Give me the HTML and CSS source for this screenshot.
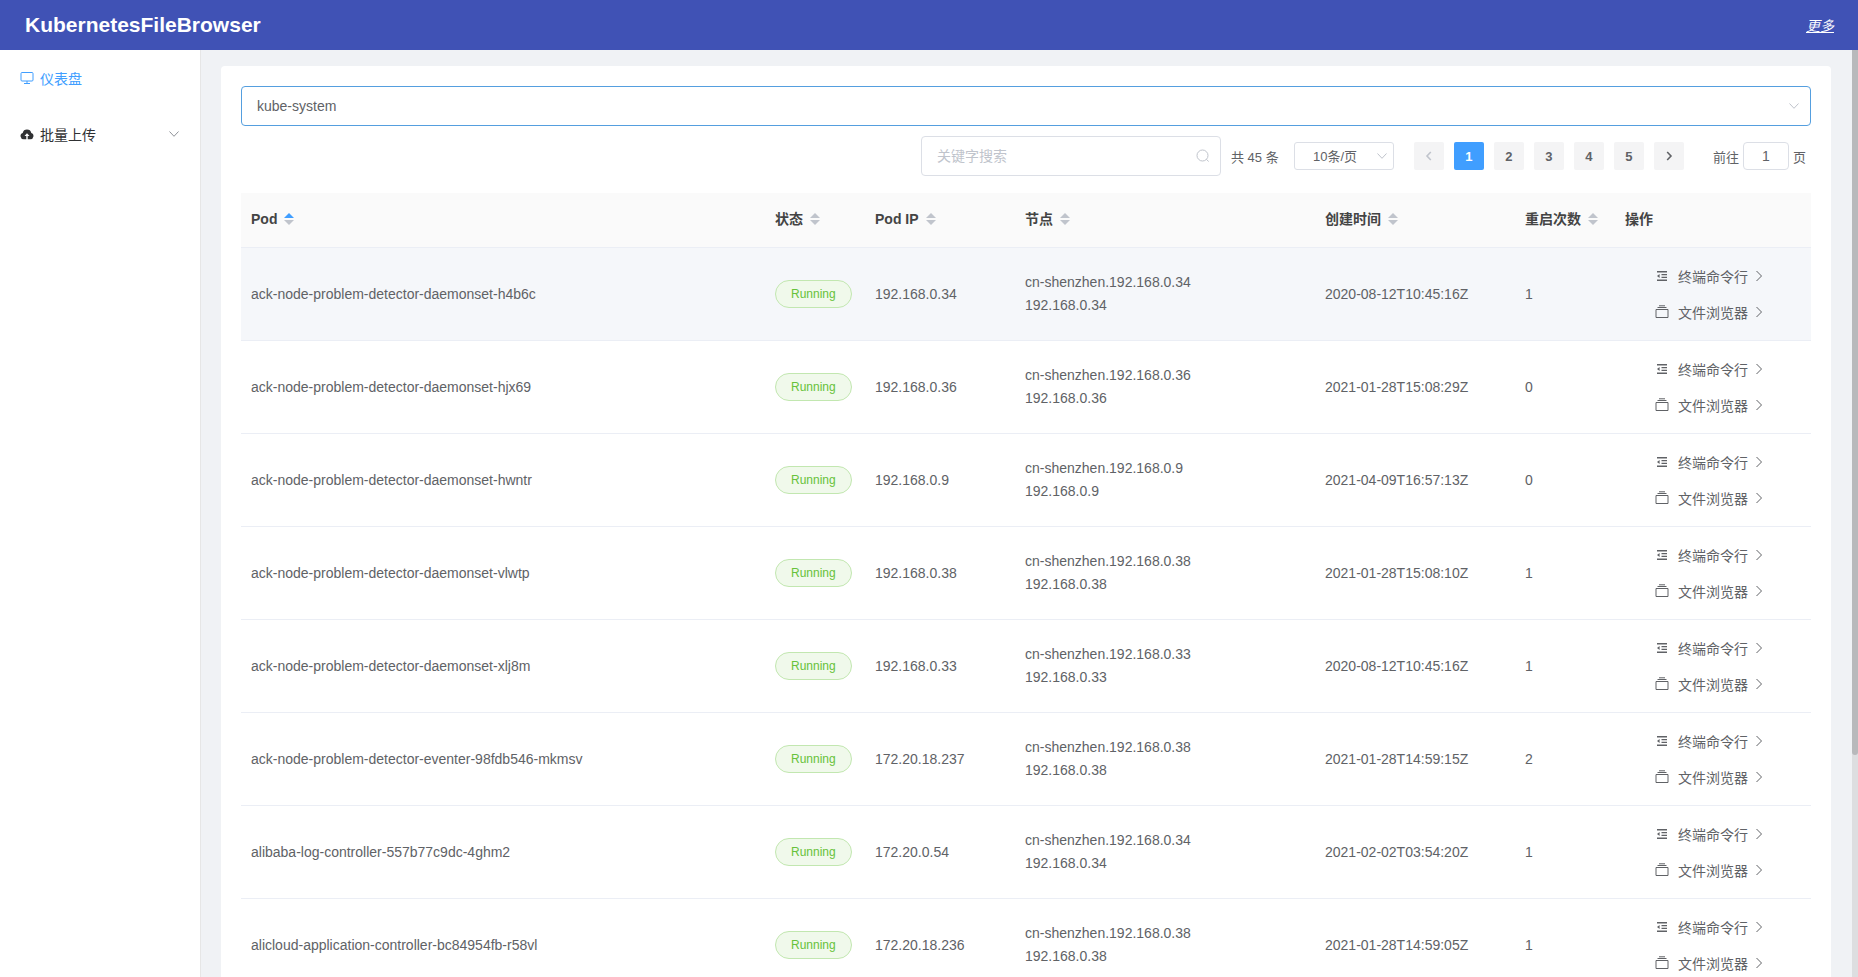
FILE: index.html
```html
<!DOCTYPE html>
<html lang="zh-CN">
<head>
<meta charset="utf-8">
<title>KubernetesFileBrowser</title>
<link rel="stylesheet" href="styles.css">
</head>
<body>
<svg class="sprite" aria-hidden="true">
  <symbol id="i-down" viewBox="0 0 12 12"><path d="M1.5 3.5 6 8.3l4.500-4.800" fill="none" stroke="currentColor"/></symbol>
  <symbol id="i-left" viewBox="0 0 12 12"><path d="M7.800 2 4 6l3.800 4" fill="none" stroke="currentColor" stroke-width="1.600"/></symbol>
  <symbol id="i-right" viewBox="0 0 12 12"><path d="M4.200 2 8 6l-3.800 4" fill="none" stroke="currentColor" stroke-width="1.600"/></symbol>
  <symbol id="i-go" viewBox="0 0 14 14"><path d="M4.500 2 9.500 7l-5 5" fill="none" stroke="currentColor"/></symbol>
  <symbol id="i-search" viewBox="0 0 14 14"><circle cx="6.500" cy="6.500" r="5.500" fill="none" stroke="currentColor"/><path d="m10.300 10.300 2.400 2.200" stroke="currentColor"/></symbol>
  <symbol id="i-monitor" viewBox="0 0 14 14"><rect x="1" y="1.500" width="12" height="8.500" rx="1" fill="none" stroke="currentColor"/><path d="M7 10v2.500M4 12.500h6" fill="none" stroke="currentColor"/></symbol>
  <symbol id="i-cloud" viewBox="0 0 14 14"><path d="M3.700 12.300a3.300 3.300 0 0 1-1-6.400 4.400 4.400 0 0 1 8.600 0 3.300 3.300 0 0 1-1 6.400H7.700V9h1.800L7 6.300 4.500 9h1.800v3.300z" fill="currentColor"/></symbol>
  <symbol id="i-term" viewBox="0 0 14 14"><path d="M2 2h10v1.600H2zM6.500 5h5.500v1.300H6.500zM6.500 7.700H12V9H6.500zM2 10.400h10V12H2zM2 7l2.600-2v4z" fill="currentColor"/></symbol>
  <symbol id="i-box" viewBox="0 0 14 14"><path d="M1 4.500h12v8H1z" fill="none" stroke="currentColor"/><path d="M2.500 2.500h9M4 .8h6" stroke="currentColor"/></symbol>
  <symbol id="i-sort" viewBox="0 0 10 12"><path class="up" d="M0 5 5 0l5 5z"/><path class="dn" d="M0 7h10l-5 5z"/></symbol>
</svg>
<header class="topbar">
  <h1 class="brand">KubernetesFileBrowser</h1>
  <a class="more" href="#">更多</a>
</header>
<div class="body">
  <nav class="side">
    <a class="item active" href="#"><svg class="ic"><use href="#i-monitor"/></svg><span>仪表盘</span></a>
    <a class="item" href="#"><svg class="ic"><use href="#i-cloud"/></svg><span>批量上传</span><svg class="ic-s arrow"><use href="#i-down"/></svg></a>
  </nav>
  <main class="main">
    <section class="card">
      <div class="pick ns">
        <select aria-label="命名空间"><option>kube-system</option></select>
        <svg class="ic-s"><use href="#i-down"/></svg>
      </div>
      <div class="tools">
        <div class="search">
          <input type="text" placeholder="关键字搜索" aria-label="关键字搜索">
          <svg class="ic"><use href="#i-search"/></svg>
        </div>
        <span class="total">共 45 条</span>
        <div class="pick size">
          <select aria-label="每页条数"><option>10条/页</option></select>
          <svg class="ic-s"><use href="#i-down"/></svg>
        </div>
        <div class="pager">
          <button type="button" disabled aria-label="上一页"><svg class="ic-s"><use href="#i-left"/></svg></button>
          <button type="button" class="on">1</button>
          <button type="button">2</button>
          <button type="button">3</button>
          <button type="button">4</button>
          <button type="button">5</button>
          <button type="button" aria-label="下一页"><svg class="ic-s"><use href="#i-right"/></svg></button>
        </div>
        <label class="jump">前往<input type="text" value="1">页</label>
      </div>
      <table class="pods">
        <colgroup><col><col class="w100"><col class="w150"><col class="w300"><col class="w200"><col class="w100"><col class="w196"></colgroup>
        <thead>
          <tr>
            <th>Pod<svg class="sort asc"><use href="#i-sort"/></svg></th>
            <th>状态<svg class="sort"><use href="#i-sort"/></svg></th>
            <th>Pod IP<svg class="sort"><use href="#i-sort"/></svg></th>
            <th>节点<svg class="sort"><use href="#i-sort"/></svg></th>
            <th>创建时间<svg class="sort"><use href="#i-sort"/></svg></th>
            <th>重启次数<svg class="sort"><use href="#i-sort"/></svg></th>
            <th>操作</th>
          </tr>
        </thead>
        <tbody>
          <tr class="hover"><td>ack-node-problem-detector-daemonset-h4b6c</td><td><span class="tag">Running</span></td><td>192.168.0.34</td><td>cn-shenzhen.192.168.0.34<br>192.168.0.34</td><td>2020-08-12T10:45:16Z</td><td>1</td><td class="ops"><button type="button"><svg class="ic"><use href="#i-term"/></svg><span>终端命令行</span><svg class="ic"><use href="#i-go"/></svg></button><button type="button"><svg class="ic"><use href="#i-box"/></svg><span>文件浏览器</span><svg class="ic"><use href="#i-go"/></svg></button></td></tr>
          <tr><td>ack-node-problem-detector-daemonset-hjx69</td><td><span class="tag">Running</span></td><td>192.168.0.36</td><td>cn-shenzhen.192.168.0.36<br>192.168.0.36</td><td>2021-01-28T15:08:29Z</td><td>0</td><td class="ops"><button type="button"><svg class="ic"><use href="#i-term"/></svg><span>终端命令行</span><svg class="ic"><use href="#i-go"/></svg></button><button type="button"><svg class="ic"><use href="#i-box"/></svg><span>文件浏览器</span><svg class="ic"><use href="#i-go"/></svg></button></td></tr>
          <tr><td>ack-node-problem-detector-daemonset-hwntr</td><td><span class="tag">Running</span></td><td>192.168.0.9</td><td>cn-shenzhen.192.168.0.9<br>192.168.0.9</td><td>2021-04-09T16:57:13Z</td><td>0</td><td class="ops"><button type="button"><svg class="ic"><use href="#i-term"/></svg><span>终端命令行</span><svg class="ic"><use href="#i-go"/></svg></button><button type="button"><svg class="ic"><use href="#i-box"/></svg><span>文件浏览器</span><svg class="ic"><use href="#i-go"/></svg></button></td></tr>
          <tr><td>ack-node-problem-detector-daemonset-vlwtp</td><td><span class="tag">Running</span></td><td>192.168.0.38</td><td>cn-shenzhen.192.168.0.38<br>192.168.0.38</td><td>2021-01-28T15:08:10Z</td><td>1</td><td class="ops"><button type="button"><svg class="ic"><use href="#i-term"/></svg><span>终端命令行</span><svg class="ic"><use href="#i-go"/></svg></button><button type="button"><svg class="ic"><use href="#i-box"/></svg><span>文件浏览器</span><svg class="ic"><use href="#i-go"/></svg></button></td></tr>
          <tr><td>ack-node-problem-detector-daemonset-xlj8m</td><td><span class="tag">Running</span></td><td>192.168.0.33</td><td>cn-shenzhen.192.168.0.33<br>192.168.0.33</td><td>2020-08-12T10:45:16Z</td><td>1</td><td class="ops"><button type="button"><svg class="ic"><use href="#i-term"/></svg><span>终端命令行</span><svg class="ic"><use href="#i-go"/></svg></button><button type="button"><svg class="ic"><use href="#i-box"/></svg><span>文件浏览器</span><svg class="ic"><use href="#i-go"/></svg></button></td></tr>
          <tr><td>ack-node-problem-detector-eventer-98fdb546-mkmsv</td><td><span class="tag">Running</span></td><td>172.20.18.237</td><td>cn-shenzhen.192.168.0.38<br>192.168.0.38</td><td>2021-01-28T14:59:15Z</td><td>2</td><td class="ops"><button type="button"><svg class="ic"><use href="#i-term"/></svg><span>终端命令行</span><svg class="ic"><use href="#i-go"/></svg></button><button type="button"><svg class="ic"><use href="#i-box"/></svg><span>文件浏览器</span><svg class="ic"><use href="#i-go"/></svg></button></td></tr>
          <tr><td>alibaba-log-controller-557b77c9dc-4ghm2</td><td><span class="tag">Running</span></td><td>172.20.0.54</td><td>cn-shenzhen.192.168.0.34<br>192.168.0.34</td><td>2021-02-02T03:54:20Z</td><td>1</td><td class="ops"><button type="button"><svg class="ic"><use href="#i-term"/></svg><span>终端命令行</span><svg class="ic"><use href="#i-go"/></svg></button><button type="button"><svg class="ic"><use href="#i-box"/></svg><span>文件浏览器</span><svg class="ic"><use href="#i-go"/></svg></button></td></tr>
          <tr><td>alicloud-application-controller-bc84954fb-r58vl</td><td><span class="tag">Running</span></td><td>172.20.18.236</td><td>cn-shenzhen.192.168.0.38<br>192.168.0.38</td><td>2021-01-28T14:59:05Z</td><td>1</td><td class="ops"><button type="button"><svg class="ic"><use href="#i-term"/></svg><span>终端命令行</span><svg class="ic"><use href="#i-go"/></svg></button><button type="button"><svg class="ic"><use href="#i-box"/></svg><span>文件浏览器</span><svg class="ic"><use href="#i-go"/></svg></button></td></tr>
        </tbody>
      </table>
    </section>
  </main>
  <div class="scroll"><div class="thumb"></div></div>
</div>
</body>
</html>
```
FILE: styles.css
```css
* { box-sizing: border-box; }
body, button, input, select {
  font-family: "Liberation Sans", "Noto Sans CJK SC", sans-serif;
  font-size: 14px;
  color: #606266;
}
body {
  margin: 0;
  height: 100vh;
  display: flex;
  flex-direction: column;
  overflow: hidden;
  background: #f0f2f5;
}
.sprite { display: none; }
.ic { width: 14px; height: 14px; flex: none; }
.ic-s { width: 12px; height: 12px; flex: none; }

.topbar {
  flex: none;
  height: 50px;
  padding: 0 24px 0 25px;
  display: flex;
  align-items: center;
  justify-content: space-between;
  background: #4052b5;
}
.brand { margin: 0; font-size: 21px; line-height: 24px; color: #fff; }
.more { color: #fff; font-style: italic; text-decoration: underline; text-underline-offset: 1px; }

.body { flex: 1; min-height: 0; display: flex; }
.side {
  flex: none;
  width: 201px;
  background: #fff;
  border-right: 1px solid #e6e6e6;
}
.item {
  display: flex;
  align-items: center;
  gap: 6px;
  height: 56px;
  padding: 0 20px;
  color: #303133;
  text-decoration: none;
}
.item.active { color: #409eff; }
.arrow { margin-left: auto; color: #909399; }

.main { flex: 1; min-width: 0; overflow: hidden; padding: 16px 21px 0 20px; }
.card { background: #fff; border-radius: 4px; padding: 20px; min-height: 100%; }

.pick, .search { position: relative; display: flex; }
.pick select {
  width: 100%;
  appearance: none;
  background: #fff;
  border: 1px solid #dcdfe6;
  border-radius: 4px;
}
.pick svg, .search svg {
  position: absolute;
  right: 11px;
  top: 0;
  bottom: 0;
  margin: auto 0;
  color: #c0c4cc;
  pointer-events: none;
}
.ns select { height: 40px; padding: 0 15px; border-color: #559fdf; }
.size { width: 100px; margin-right: 20px; }
.size svg { right: 6px; }
.size select { height: 28px; padding: 0 18px; font-size: 13px; border-radius: 3px; }

.tools {
  display: flex;
  align-items: center;
  justify-content: flex-end;
  margin: 10px 0 17px;
  font-size: 13px;
}
.search { width: 300px; margin-right: 10px; }
.search input {
  width: 100%;
  height: 40px;
  padding: 0 30px 0 15px;
  border: 1px solid #dcdfe6;
  border-radius: 4px;
}
.search input::placeholder { color: #c0c4cc; }
.total { width: 63px; white-space: nowrap; }
.pager { display: flex; gap: 10px; margin-right: 29px; }
.pager button {
  width: 30px;
  height: 28px;
  padding: 0;
  display: flex;
  align-items: center;
  justify-content: center;
  border: 0;
  border-radius: 2px;
  background: #f4f4f5;
  font-size: 13px;
  font-weight: 700;
}
.pager button:disabled { color: #c0c4cc; }
.pager .on { background: #409eff; color: #fff; }
.jump { display: flex; align-items: center; gap: 4px; padding-right: 5px; }
.jump input {
  width: 46px;
  height: 28px;
  padding: 0;
  text-align: center;
  border: 1px solid #dcdfe6;
  border-radius: 4px;
}

.pods { width: 100%; table-layout: fixed; border-collapse: separate; border-spacing: 0; }
.w100 { width: 100px; }
.w150 { width: 150px; }
.w196 { width: 196px; }
.w200 { width: 200px; }
.w300 { width: 300px; }
.pods th, .pods td {
  padding: 0 10px;
  text-align: left;
  border-bottom: 1px solid #ebeef5;
  line-height: 23px;
  white-space: nowrap;
}
.pods th {
  height: 55px;
  padding-bottom: 2px;
  background: #fafafa;
  color: #444;
  font-weight: 700;
}
.pods td { height: 93px; }
.pods .hover td { background: #f5f7fa; }
.sort { width: 10px; height: 12px; margin-left: 7px; vertical-align: -1px; color: #c0c4cc; fill: #c0c4cc; }
.sort.asc { color: #409eff; }
.up { fill: currentColor; }
.tag {
  display: inline-block;
  height: 28px;
  padding: 0 15px;
  border: 1px solid #c2e7b0;
  border-radius: 14px;
  background: #f0f9eb;
  color: #67c23a;
  font-size: 12px;
  line-height: 26px;
}
.pods .ops { padding-left: 40px; }
.ops button {
  display: flex;
  align-items: center;
  height: 36px;
  padding: 0;
  border: 0;
  background: none;
}
.ops span { margin: 0 4px 0 9px; }

.scroll { flex: none; width: 6px; background: #dddee0; }
.thumb { height: 76%; border-radius: 0 0 3px 3px; background: #b8b9bb; }
```
